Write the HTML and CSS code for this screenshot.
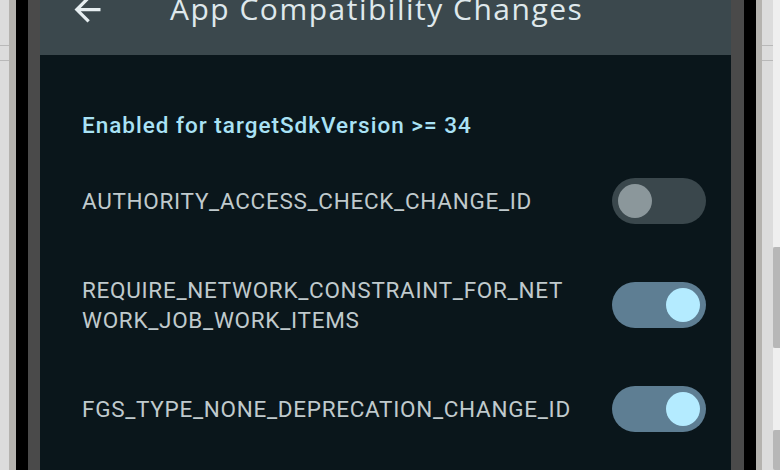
FILE: index.html
```html
<!DOCTYPE html>
<html>
<head>
<meta charset="utf-8">
<link rel="stylesheet" href="styles.css">
</head>
<body>
<div class="desk">
  <div class="side side-left"><div class="rule r1"></div><div class="rule r2"></div></div>
  <div class="bezel-light"></div>
  <div class="bezel-black"></div>
  <div class="bezel-grey"></div>
  <div class="app">
    <header class="appbar">
      <div class="appbar-row">
        <svg class="back" viewBox="0 0 24 24" width="39" height="39"><path fill="#e6eef1" d="M20 11H7.83l5.59-5.59L12 4l-8 8 8 8 1.41-1.41L7.83 13H20v-2z"/></svg>
        <h1 class="title">App Compatibility Changes</h1>
      </div>
    </header>
    <main class="content">
      <div class="section-head">Enabled for targetSdkVersion &gt;= 34</div>
      <div class="row">
        <div class="label">AUTHORITY_ACCESS_CHECK_CHANGE_ID</div>
        <div class="switch off"><span class="thumb"></span></div>
      </div>
      <div class="row">
        <div class="label">REQUIRE_NETWORK_CONSTRAINT_FOR_NETWORK_JOB_WORK_ITEMS</div>
        <div class="switch on"><span class="thumb"></span></div>
      </div>
      <div class="row">
        <div class="label">FGS_TYPE_NONE_DEPRECATION_CHANGE_ID</div>
        <div class="switch on"><span class="thumb"></span></div>
      </div>
    </main>
  </div>
  <div class="bezel-grey r"></div>
  <div class="bezel-black r"></div>
  <div class="bezel-light r"></div>
  <div class="side side-right">
    <div class="rules">
      <div class="rule r1"></div><div class="rule r2"></div>
    </div>
    <div class="scroll">
      <div class="track t1"></div>
      <div class="sthumb th1"></div>
      <div class="track t2"></div>
      <div class="sthumb th2"></div>
    </div>
  </div>
</div>
</body>
</html>
```
FILE: styles.css
```css
* { box-sizing: border-box; }
html, body { margin: 0; padding: 0; }
body {
  width: 780px;
  height: 470px;
  overflow: hidden;
  background: #dcdcdc;
  font-family: Roboto, "Noto Sans", sans-serif;
}
.desk {
  display: flex;
  height: 470px;
}
.desk > div { flex: none; }
.side { background: #dcdcdc; }
.side-left { width: 9px; }
.side-right {
  width: 18px;
  display: flex;
}
.rules { flex: 1; }
.rule {
  height: 1px;
  background: #b9b9b9;
}
.r1 { margin-top: 45px; }
.r2 { margin-top: 14px; }
.scroll {
  width: 7px;
  display: flex;
  flex-direction: column;
}
.track { background: #efefef; }
.t1 { height: 250px; }
.t2 { height: 83px; }
.sthumb { background: #b7b7b7; border-radius: 2px 0 0 2px; }
.th1 { height: 102px; }
.th2 { height: 40px; }
.bezel-light { width: 7px; background: #b5b3af; }
.bezel-light.r { width: 6px; }
.bezel-black { width: 12px; background: #000; }
.bezel-grey { width: 12px; background: #4a4a4a; }
.bezel-grey.r { width: 13px; }
.app {
  width: 691px;
  background: #0a161b;
  display: flex;
  flex-direction: column;
}
.appbar {
  height: 55px;
  background: #3b484d;
  overflow: hidden;
  flex: none;
}
.appbar-row {
  height: 56px;
  margin-top: -19px;
  display: flex;
  align-items: center;
  padding-left: 28px;
}
.back { flex: none; }
.title {
  margin: 0 0 0 63px;
  font-family: "Open Sans", Roboto, sans-serif;
  font-weight: 400;
  font-size: 30px;
  letter-spacing: 1.5px;
  line-height: 40px;
  color: #dfe8ec;
  white-space: nowrap;
}
.content {
  padding: 55px 25px 0 42px;
}
.section-head {
  height: 30px;
  line-height: 30px;
  font-size: 22.5px;
  font-weight: 500;
  letter-spacing: 1px;
  color: #a9e2f5;
  margin-bottom: 9px;
}
.row {
  height: 104px;
  display: flex;
  align-items: center;
  gap: 33px;
}
.label {
  flex: 1;
  font-size: 22.5px;
  letter-spacing: 0.7px;
  line-height: 30px;
  color: #c0cacd;
  word-break: break-all;
}
.switch {
  flex: none;
  width: 94px;
  height: 46px;
  border-radius: 23px;
  padding: 0 6px;
  display: flex;
  align-items: center;
}
.switch .thumb {
  width: 34px;
  height: 34px;
  border-radius: 50%;
}
.switch.off { background: #3a474c; justify-content: flex-start; }
.switch.off .thumb { background: #8b979b; }
.switch.on { background: #5e7e93; justify-content: flex-end; }
.switch.on .thumb { background: #b4ebff; }
```
